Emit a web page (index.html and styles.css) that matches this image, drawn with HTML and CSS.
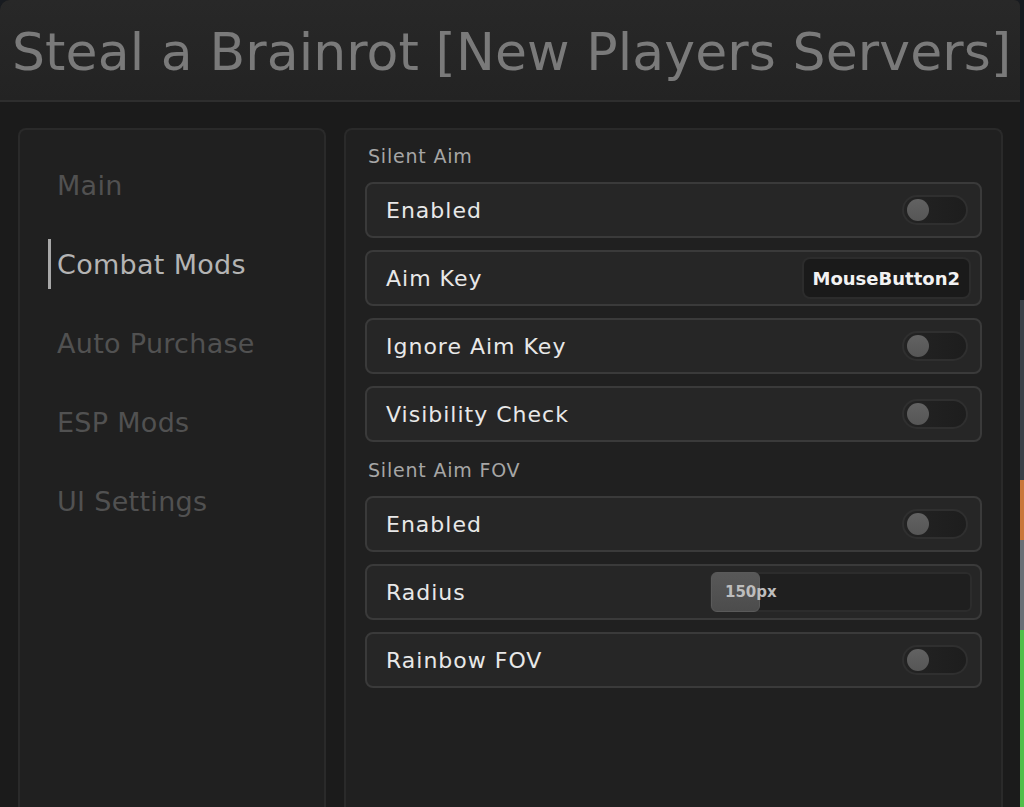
FILE: index.html
```html
<!DOCTYPE html>
<html>
<head>
<meta charset="utf-8">
<link rel="stylesheet" href="styles.css">
</head>
<body>
<div class="screen">
  <div class="window">
    <header class="titlebar">
      <h1 class="title">Steal a Brainrot [New Players Servers]</h1>
    </header>
    <div class="content">
      <nav class="sidebar">
        <div class="nav-item">Main</div>
        <div class="nav-item active">Combat Mods</div>
        <div class="nav-item">Auto Purchase</div>
        <div class="nav-item">ESP Mods</div>
        <div class="nav-item">UI Settings</div>
      </nav>
      <main class="panel">
        <div class="section-label">Silent Aim</div>
        <div class="row"><span class="row-label">Enabled</span><span class="toggle"><span class="knob"></span></span></div>
        <div class="row"><span class="row-label">Aim Key</span><span class="keybind">MouseButton2</span></div>
        <div class="row"><span class="row-label">Ignore Aim Key</span><span class="toggle"><span class="knob"></span></span></div>
        <div class="row"><span class="row-label">Visibility Check</span><span class="toggle"><span class="knob"></span></span></div>
        <div class="section-label">Silent Aim FOV</div>
        <div class="row"><span class="row-label">Enabled</span><span class="toggle"><span class="knob"></span></span></div>
        <div class="row"><span class="row-label">Radius</span><span class="slider"><span class="slider-fill"></span><span class="slider-value">150px</span></span></div>
        <div class="row"><span class="row-label">Rainbow FOV</span><span class="toggle"><span class="knob"></span></span></div>
      </main>
    </div>
  </div>
  <div class="backdrop"><span class="b1"></span><span class="b2"></span><span class="b3"></span><span class="b4"></span><span class="b5"></span></div>
</div>
</body>
</html>
```
FILE: styles.css
```css
* { box-sizing: border-box; }
html, body { margin: 0; padding: 0; }
body {
  width: 1024px;
  height: 807px;
  overflow: hidden;
  background: #181b20;
  font-family: "DejaVu Sans", "Noto Sans", sans-serif;
}
.screen {
  display: flex;
  width: 1024px;
  height: 807px;
}
.window {
  width: 1020px;
  height: 807px;
  background: #1b1b1b;
  border-top-left-radius: 10px;
  border-top-right-radius: 6px;
  overflow: hidden;
  display: flex;
  flex-direction: column;
}
.titlebar {
  height: 102px;
  flex: none;
  background: linear-gradient(#282828, #232323);
  border-bottom: 2px solid #2e2e2e;
  display: flex;
  align-items: center;
  padding-left: 12px;
}
.title {
  margin: 0;
  font-weight: 400;
  font-size: 52px;
  color: #7a7a7a;
  white-space: nowrap;
  letter-spacing: 0.1px;
  position: relative;
  top: 2px;
}
.content {
  flex: 1;
  display: grid;
  grid-template-columns: 308px 659px;
  column-gap: 18px;
  padding: 26px 0 0 18px;
}
.sidebar {
  background: #202020;
  border: 2px solid #2a2a2a;
  border-bottom: none;
  border-radius: 8px 8px 0 0;
  padding: 30px 0 0 28px;
  display: flex;
  flex-direction: column;
}
.nav-item {
  height: 50px;
  margin-bottom: 29px;
  display: flex;
  align-items: center;
  padding-left: 6px;
  font-size: 27px;
  letter-spacing: 0.3px;
  color: #515151;
  border-left: 3px solid transparent;
}
.nav-item.active {
  color: #b4b4b4;
  border-left-color: #a8a8a8;
}
.panel {
  background: #202020;
  border: 2px solid #2a2a2a;
  border-bottom: none;
  border-radius: 8px 8px 0 0;
  padding: 10px 19px 0 19px;
  display: flex;
  flex-direction: column;
  gap: 12px;
}
.section-label {
  font-size: 19px;
  letter-spacing: 0.8px;
  color: #a6a6a6;
  padding-left: 3px;
  height: 32px;
  display: flex;
  align-items: center;
  margin-bottom: -2px;
}
.row {
  height: 56px;
  background: #262626;
  border: 2px solid #3a3a3a;
  border-radius: 8px;
  display: flex;
  align-items: center;
  justify-content: space-between;
  padding: 0 8px 0 19px;
}
.row-label {
  font-size: 22px;
  letter-spacing: 1px;
  color: #e8e8e8;
}
.toggle {
  width: 66px;
  height: 30px;
  border-radius: 15px;
  background: linear-gradient(90deg, #232323, #1d1d1d);
  border: 2px solid #2f2f2f;
  display: flex;
  align-items: center;
  padding-left: 3px;
  margin-right: 4px;
}
.knob {
  width: 22px;
  height: 22px;
  border-radius: 50%;
  background: linear-gradient(#626262, #565656);
}
.keybind {
  height: 42px;
  padding: 0 9px;
  background: #1a1a1a;
  border: 2px solid #2c2c2c;
  border-radius: 8px;
  display: flex;
  align-items: center;
  font-size: 18px;
  font-weight: 600;
  color: #f2f2f2;
  margin-right: 1px;
}
.slider {
  width: 262px;
  height: 40px;
  background: #1f1f1f;
  border: 2px solid #2c2c2c;
  border-radius: 6px;
  position: relative;
  display: flex;
  align-items: center;
}
.slider-fill {
  position: absolute;
  left: -1px;
  top: -2px;
  width: 49px;
  height: 40px;
  border-radius: 6px;
  background: linear-gradient(#585858, #4c4c4c);
  border: 1px solid #5a5a5a;
}
.slider-value {
  position: relative;
  margin-left: 13px;
  font-size: 15px;
  font-weight: 700;
  color: #bdbdbd;
}
.backdrop {
  width: 4px;
  height: 807px;
  display: flex;
  flex-direction: column;
  background: #151a1f;
}
.b1 { height: 300px; background: #151a1f; }
.b2 { height: 180px; background: #3a4048; }
.b3 { height: 60px; background: #c9773a; }
.b4 { height: 90px; background: #6a6f76; }
.b5 { flex: 1; background: #4fbf4a; }
```
